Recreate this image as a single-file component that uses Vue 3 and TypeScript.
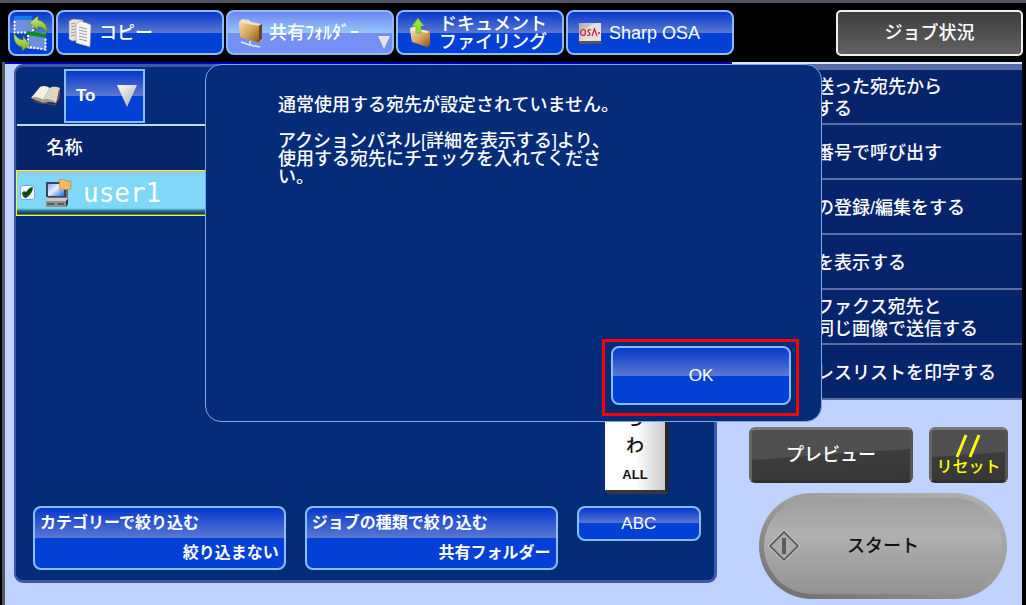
<script setup lang="ts">
import { ref } from 'vue'

const actions: string[][] = [
  ['送った宛先から', 'する'],
  ['番号で呼び出す'],
  ['の登録/編集をする'],
  ['を表示する'],
  ['ファクス宛先と', '同じ画像で送信する'],
  ['レスリストを印字する'],
]
const indexKeys: string[] = ['ら', 'わ', 'ALL']
const filters = [
  { title: 'カテゴリーで絞り込む', value: '絞り込まない' },
  { title: 'ジョブの種類で絞り込む', value: '共有フォルダー' },
]
const userChecked = ref(true)
</script>

<template>
  <div class="page">
    <header class="header">
      <button class="gloss swap" aria-label="切り替え">
        <svg width="36" height="38" viewBox="0 0 36 38">
          <defs>
            <linearGradient id="leaf" x1="0" y1="0" x2="0" y2="1">
              <stop offset="0" stop-color="#d2ec7c" />
              <stop offset="1" stop-color="#6fae1c" />
            </linearGradient>
          </defs>
          <rect x="1" y="3" width="18" height="16" fill="#6f8fd8" />
          <rect x="1" y="2" width="18" height="4" fill="#1c78f0" />
          <path d="M1.500 7V18.500H20V7" fill="none" stroke="#fff" stroke-width="2" stroke-dasharray="2 1.500" />
          <rect x="15" y="19" width="18" height="16" fill="#6f8fd8" />
          <path d="M14 17L33 20V24L14 21Z" fill="#128a18" />
          <path d="M15 21V33L32.500 35.500V24" fill="none" stroke="#fff" stroke-width="2" stroke-dasharray="2 1.500" />
          <path d="M16 9L25 2V6C31 7 35 12 34 19C31 14 29 13 25 13V16Z" fill="url(#leaf)" stroke="#42731c" stroke-width=".6" />
          <path d="M17 31L9 37V33C3 32 0 26 1 19C4 24 6 25 10 26V22Z" fill="url(#leaf)" stroke="#42731c" stroke-width=".6" />
        </svg>
      </button>
      <nav class="tabs">
        <button class="gloss tab">
          <svg width="24" height="30" viewBox="0 0 24 30">
            <path d="M1 3L5 1L15 2V22L4 23L1 21Z" fill="#e6e6e0" stroke="#8c8c88" stroke-width=".6" />
            <path d="M8 6L12 3L19 5L23 7L22 29L8 25Z" fill="#f6f6f2" stroke="#8c8c88" stroke-width=".6" />
            <path d="M3 6L7 5M3 9L7 8M3 12L7 11M3 15L7 14M3 18L7 17M11 9L19 11M11 12L19 14M11 15L19 17M11 18L19 20M11 21L19 23" stroke="#9a9a98" stroke-width="1" />
          </svg>
          <span>コピー</span>
        </button>
        <button class="gloss tab active">
          <svg width="24" height="30" viewBox="0 0 24 30">
            <defs>
              <linearGradient id="folder" x1="0" y1="0" x2="1" y2="1">
                <stop offset="0" stop-color="#f7dfae" />
                <stop offset=".5" stop-color="#d6a25a" />
                <stop offset="1" stop-color="#84521c" />
              </linearGradient>
            </defs>
            <path d="M1 4L4 1L11 2L13 4L23 6L24 22L20 25L3 19Z" fill="#f2e3c2" />
            <path d="M20 8L24 6V21L20 25Z" fill="#6c4418" />
            <path d="M1 4L21 8V25L2 19Z" fill="url(#folder)" />
            <path d="M12 23V27M3 24L12 27L22 29" stroke="#e4ecf4" stroke-width="1.500" fill="none" />
          </svg>
          <span>共有ﾌｫﾙﾀﾞｰ</span>
          <svg class="drop" width="12" height="13" viewBox="0 0 12 13"><path d="M0 0H12L6 13Z" fill="#e4e6ea" /></svg>
        </button>
        <button class="gloss tab">
          <svg width="24" height="30" viewBox="0 0 24 30">
            <path d="M2 10L8 8L11 11L20 13L22 26L19 28L4 23Z" fill="#f4ead2" />
            <path d="M2 12L19 15L22 12V27L19 29L4 24Z" fill="url(#folder)" />
            <path d="M10 0L16 8H13V15H8V8H4Z" fill="#93e03a" stroke="#5aa81c" stroke-width=".6" />
          </svg>
          <span>ドキュメント<br />ファイリング</span>
        </button>
        <button class="gloss tab">
          <svg width="24" height="24" viewBox="0 0 24 24">
            <defs>
              <linearGradient id="osa" x1="0" y1="0" x2="1" y2="1">
                <stop offset="0" stop-color="#aaa" />
                <stop offset=".6" stop-color="#e8e8e8" />
                <stop offset="1" stop-color="#bbb" />
              </linearGradient>
            </defs>
            <rect x="1" y="2" width="22" height="21" fill="url(#osa)" />
            <path d="M23 2C13 2 8 7 8 12C8 17 13 20 23 20Z" fill="#e2e2e2" />
            <rect x="1" y="20" width="22" height="3" fill="#555" />
            <ellipse cx="5" cy="11.500" rx="2.500" ry="3" fill="none" stroke="#d01820" stroke-width="1.200" />
            <path d="M13 9C10 8 9 10 11 11.500C13 13 12 15 9 14M14 15L16.500 8L19 15" fill="none" stroke="#d01820" stroke-width="1.200" />
            <circle cx="21" cy="12" r="1" fill="#d01820" />
          </svg>
          <span>Sharp OSA</span>
        </button>
      </nav>
      <button class="status">ジョブ状況</button>
    </header>

    <main class="screen">
      <div class="left">
        <section class="panel">
          <div class="toolbar">
            <svg width="30" height="22" viewBox="0 0 30 22">
              <path d="M2 15L8 18L13 18L24 20L29 9" fill="none" stroke="#6c4a38" stroke-width="1.200" />
              <path d="M0 13L9 2C12 0 16 1 19 3L12 15C8 12 4 12 0 13Z" fill="#f2efdf" />
              <path d="M12 15L19 3C22 1 26 2 29 3L25 18C20 14 16 14 12 15Z" fill="#ded8c0" />
              <path d="M0 13C4 12 8 12 12 15C16 14 20 14 25 18L18 17L12 18L7 16Z" fill="#a89f80" />
              <path d="M28 6V9M27 12V15" stroke="#d84030" stroke-width="1.500" />
            </svg>
            <button class="gloss to">
              <span>To</span>
              <svg width="20" height="22" viewBox="0 0 20 22">
                <defs>
                  <linearGradient id="tri" x1="0" y1="0" x2="1" y2="1">
                    <stop offset="0" stop-color="#fff" />
                    <stop offset="1" stop-color="#a8a8a8" />
                  </linearGradient>
                </defs>
                <path d="M0 0H20L10 22Z" fill="url(#tri)" />
              </svg>
            </button>
          </div>
          <div class="body">
            <table class="book">
              <thead>
                <tr><th>名称</th></tr>
              </thead>
              <tbody>
                <tr>
                  <td>
                    <label class="entry">
                      <span class="tick">
                        <input v-model="userChecked" type="checkbox" />
                        <svg v-if="userChecked" width="15" height="15" viewBox="0 0 15 15">
                          <path d="M2 8C3 6 5 6 6 7C8 4 10 2 13 2C13 6 10 11 6 13C4 13 2 11 2 8Z" fill="#155c16" />
                          <path d="M4 8L6 10L11 4" fill="none" stroke="#06380a" stroke-width="1.500" />
                        </svg>
                      </span>
                      <svg width="26" height="28" viewBox="0 0 26 28">
                        <defs>
                          <linearGradient id="scr" x1="0" y1="0" x2="1" y2="1">
                            <stop offset="0" stop-color="#8fa4ff" />
                            <stop offset=".45" stop-color="#e8f2ff" />
                            <stop offset="1" stop-color="#1068ff" />
                          </linearGradient>
                        </defs>
                        <path d="M0 3H20L22 5V19H2L0 17Z" fill="#6a7078" />
                        <rect x="0" y="3" width="20" height="15" fill="#3c4450" />
                        <rect x="2" y="5" width="16" height="12" fill="url(#scr)" />
                        <path d="M0 22L3 19H22L20 22Z" fill="#c8c8c8" />
                        <path d="M20 22L22 19V25L20 28Z" fill="#383838" />
                        <rect x="0" y="22" width="20" height="6" fill="#909090" />
                        <path d="M1 25H8M12 25H18" stroke="#222" stroke-width="1.200" />
                        <path d="M13 1L18 0L20 2H25V10L14 11Z" fill="#f3b866" stroke="#b9803a" stroke-width=".6" />
                      </svg>
                      <span class="name">user1</span>
                    </label>
                  </td>
                </tr>
              </tbody>
            </table>
            <div class="index">
              <button v-for="k in indexKeys" :key="k" :class="{ all: k === 'ALL' }">{{ k }}</button>
            </div>
          </div>
          <div class="filters">
            <button v-for="f in filters" :key="f.title" class="gloss filter">
              <span>{{ f.title }}</span>
              <span class="value">{{ f.value }}</span>
            </button>
            <button class="gloss abc">ABC</button>
          </div>
        </section>
      </div>

      <aside class="right">
        <ul class="actions">
          <li v-for="(a, i) in actions" :key="i">
            <button><span v-for="line in a" :key="line">{{ line }}</span></button>
          </li>
        </ul>
        <div class="keys">
          <button class="dark preview">プレビュー</button>
          <button class="dark reset">
            <svg width="28" height="24" viewBox="0 0 28 24"><path d="M2 23L11 1M15 23L24 1" stroke="#ff0" stroke-width="3" /></svg>
            <span>リセット</span>
          </button>
        </div>
        <button class="start">
          <svg width="32" height="32" viewBox="0 0 32 32">
            <path d="M16 1.500L30.500 16L16 30.500L1.500 16Z" fill="#aaa" stroke="#c8c8c8" stroke-width="3" />
            <path d="M16 2L30 16L16 30L2 16Z" fill="none" stroke="#5c5c5c" stroke-width="1.800" />
            <path d="M16 8V24" stroke="#5c5c5c" stroke-width="4" />
          </svg>
          <span>スタート</span>
        </button>
      </aside>

      <div class="dialog" role="dialog">
        <p>通常使用する宛先が設定されていません。</p>
        <p>アクションパネル[詳細を表示する]より、<br />使用する宛先にチェックを入れてくださ<br />い。</p>
        <div class="highlight"><button class="gloss ok">OK</button></div>
      </div>
    </main>
  </div>
</template>

<style>
body {
  margin: 0;
  background: #000;
}
</style>

<style scoped>
* {
  box-sizing: border-box;
}
.page {
  min-height: 100vh;
  display: flex;
  flex-direction: column;
  background: #000;
  border-top: 3px solid #54565f;
  color: #fff;
  font: 500 18px/18px "Liberation Sans", "Noto Sans CJK JP", sans-serif;
}
button {
  font: inherit;
  color: inherit;
  margin: 0;
  padding: 0;
  border: 0;
  background: none;
}
svg {
  display: block;
  flex: none;
}
.gloss {
  border: 2px solid #8cbcff;
  border-radius: 8px;
  background: linear-gradient(#0638cc 0%, #5a78d2 50%, #0340d6 50%, #0340d6 100%);
}
.header {
  display: flex;
  align-items: center;
  gap: 2px;
  height: 59px;
  padding: 0 3px 0 8px;
}
.swap {
  width: 46px;
  height: 46px;
  display: grid;
  place-items: center;
}
.tabs {
  flex: 1;
  display: flex;
  gap: 2px;
}
.tab {
  position: relative;
  flex: 0 1 168px;
  height: 45px;
  display: flex;
  align-items: center;
  gap: 7px;
  padding-left: 10px;
  text-align: left;
  white-space: nowrap;
}
.active {
  background: linear-gradient(#6c86f0 0%, #94c6fa 50%, #7490f5 50%, #7490f5 100%);
}
.drop {
  position: absolute;
  right: 2px;
  bottom: 4px;
}
.status {
  width: 187px;
  height: 46px;
  border: 2px solid #f0f0f0;
  border-radius: 5px;
  background: linear-gradient(#3e3e3e, #626262);
}
.screen {
  position: relative;
  flex: 1;
  display: grid;
  grid-template-columns: 1fr 290px;
  margin: 0 4px 0 2px;
  border-left: 3px solid #55585f;
  border-bottom: 1px solid #8c96b4;
  background: #c0d2ff;
}
.left {
  display: flex;
  border-top: 2px solid #0000b4;
  padding: 0 15px 22px 9px;
}
.panel {
  flex: 1;
  display: flex;
  flex-direction: column;
  border: 3px solid #3c57ae;
  border-left-width: 2px;
  border-radius: 9px;
  background: #042c78;
}
.toolbar {
  display: flex;
  align-items: center;
  gap: 3px;
  height: 57px;
  padding-left: 15px;
}
.to {
  width: 81px;
  height: 54px;
  border-radius: 0;
  display: flex;
  align-items: center;
  justify-content: space-between;
  padding: 0 6px 0 10px;
  font-size: 17px;
  font-weight: 700;
}
.body {
  flex: 1;
  display: flex;
  align-items: flex-start;
  justify-content: space-between;
}
.book {
  width: 80%;
  border-collapse: collapse;
}
.book th {
  height: 45px;
  padding: 0 30px;
  border-top: 2px solid #c4d8f0;
  background: #06246a;
  text-align: left;
  font-weight: 500;
}
.book td {
  height: 45px;
  padding: 0 3px;
  border: 1px solid #ff0;
  background: linear-gradient(#a8b8d8 0, #80d8f8 5px, #80d8f8 38px, #2a7488 40px, #0c3044 44px);
}
.entry {
  display: flex;
  align-items: center;
  gap: 11px;
}
.tick {
  display: grid;
}
.tick > * {
  grid-area: 1 / 1;
}
.tick input {
  appearance: none;
  width: 15px;
  height: 15px;
  margin: 0;
  border: 1px solid #8aa0f4;
  border-radius: 3px;
  background: #f2f8fa;
}
.name {
  font: 26px/30px "DejaVu Sans Mono", monospace;
}
.index {
  align-self: flex-end;
  width: 64px;
  margin-right: 45px;
  display: flex;
  flex-direction: column;
  border-right: 4px solid #24282c;
  border-bottom: 4px solid #34383c;
  border-radius: 0 0 4px 4px;
  background: linear-gradient(90deg, #fff 50%, #ccc);
  color: #111;
}
.index button {
  height: 27px;
}
.index .all {
  font-size: 13px;
  font-weight: 700;
  height: 31px;
}
.filters {
  display: grid;
  grid-template-columns: 252fr 252fr 124fr;
  align-items: start;
  gap: 19px;
  padding: 12px 13px 10px 17px;
}
.filter {
  height: 64px;
  display: flex;
  flex-direction: column;
  justify-content: space-between;
  padding: 6px 5px;
  font-size: 16px;
  font-weight: 700;
  text-align: left;
  white-space: nowrap;
}
.value {
  align-self: flex-end;
}
.abc {
  height: 35px;
  font-size: 17px;
}
.right {
  display: flex;
  flex-direction: column;
}
.actions {
  list-style: none;
  margin: 0;
  padding: 0;
  border-top: 2px solid #dbe8ff;
}
.actions li {
  height: 55px;
  border-bottom: 2px solid #5a6ea4;
  background: #06246c;
}
.actions li:first-child {
  height: 61px;
  border-top: 6px solid #556ca4;
}
.actions button {
  width: 100%;
  height: 100%;
  display: flex;
  flex-direction: column;
  justify-content: center;
  padding: 3px 0 0 84px;
  text-align: left;
  line-height: 22px;
  white-space: nowrap;
}
.keys {
  display: flex;
  gap: 16px;
  padding: 27px 14px 10px 17px;
}
.dark {
  height: 56px;
  border: 3px solid;
  border-color: #777 #555 #303030 #666;
  border-radius: 6px;
  background: linear-gradient(176deg, #505050 48%, #3c3c3c 50%, #363636);
}
.preview {
  flex: 1;
}
.reset {
  width: 79px;
  display: flex;
  flex-direction: column;
  align-items: center;
  justify-content: center;
  color: #ff0;
  font-size: 16px;
}
.start {
  height: 106px;
  margin: 0 15px 6px 27px;
  display: flex;
  align-items: center;
  gap: 47px;
  padding: 0 0 0 4px;
  border: 5px solid transparent;
  border-radius: 53px;
  background:
    linear-gradient(#9e9e9e, #b0b0b0 38%, #929292) padding-box,
    linear-gradient(200deg, #b2b2b2, #9a9a9a 50%, #6c6c6c) border-box;
  color: #111;
}
.dialog {
  position: absolute;
  top: 2px;
  left: 200px;
  right: 200px;
  min-height: 358px;
  display: flex;
  flex-direction: column;
  gap: 18px;
  padding: 31px 22px 5px 72px;
  border: 1px solid #7ea4ec;
  border-radius: 16px;
  background: #042c78;
}
.dialog p {
  margin: 0;
}
.highlight {
  align-self: flex-end;
  margin-top: auto;
  border: 3px solid #f00;
  padding: 4px 5px 8px 6px;
}
.ok {
  display: block;
  width: 180px;
  height: 59px;
  font-size: 17px;
}
</style>
